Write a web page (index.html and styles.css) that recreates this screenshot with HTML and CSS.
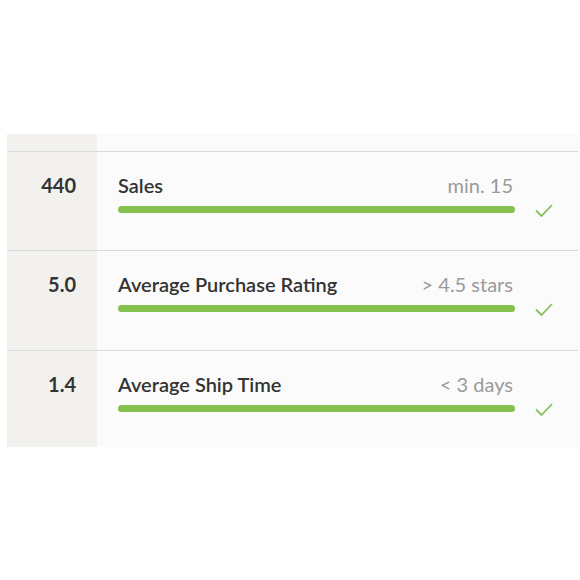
FILE: index.html
```html
<!DOCTYPE html>
<html lang="en">
<head>
    <meta charset="UTF-8">
    <title>Seller Requirements</title>
    <link rel="stylesheet" href="styles.css">
</head>
<body>
    <div class="card">
        <div class="card-top"></div>

        <!-- Sales -->
        <div class="metric">
            <div class="metric-value">440</div>
            <div class="metric-body">
                <div class="metric-head">
                    <span class="metric-label">Sales</span>
                    <span class="metric-target">min. 15</span>
                </div>
                <div class="bar"><div class="bar-fill" style="width: 100%"></div></div>
            </div>
            <div class="metric-check">
                <svg width="18" height="13" viewBox="0 0 18 13"><path d="M1 6.5 L6.5 12 L17 1" fill="none" stroke="#86c05a" stroke-width="1.8"/></svg>
            </div>
        </div>

        <!-- Rating -->
        <div class="metric">
            <div class="metric-value">5.0</div>
            <div class="metric-body">
                <div class="metric-head">
                    <span class="metric-label">Average Purchase Rating</span>
                    <span class="metric-target">&gt; 4.5 stars</span>
                </div>
                <div class="bar"><div class="bar-fill" style="width: 100%"></div></div>
            </div>
            <div class="metric-check">
                <svg width="18" height="13" viewBox="0 0 18 13"><path d="M1 6.5 L6.5 12 L17 1" fill="none" stroke="#86c05a" stroke-width="1.8"/></svg>
            </div>
        </div>

        <!-- Ship time -->
        <div class="metric">
            <div class="metric-value">1.4</div>
            <div class="metric-body">
                <div class="metric-head">
                    <span class="metric-label">Average Ship Time</span>
                    <span class="metric-target">&lt; 3 days</span>
                </div>
                <div class="bar"><div class="bar-fill" style="width: 100%"></div></div>
            </div>
            <div class="metric-check">
                <svg width="18" height="13" viewBox="0 0 18 13"><path d="M1 6.5 L6.5 12 L17 1" fill="none" stroke="#86c05a" stroke-width="1.8"/></svg>
            </div>
        </div>
    </div>
</body>
</html>
```

FILE: styles.css
```css
:root {
    --side-bg: #f2f1ee;
    --main-bg: #fbfbfb;
    --line: #d9d9d9;
    --text: #333333;
    --muted: #9a9a9a;
    --green: #86c14f;
}

* {
    margin: 0;
    padding: 0;
    box-sizing: border-box;
}

body {
    background: #ffffff;
    font-family: "Lato", "Open Sans", sans-serif;
    color: var(--text);
    padding: 134px 2px 0 7px;
}

.card {
    width: 571px;
    background: linear-gradient(to right, var(--side-bg) 90px, var(--main-bg) 90px);
}

.card-top {
    height: 17px;
}

.metric {
    display: grid;
    grid-template-columns: 90px 1fr 63px;
    border-top: 1px solid var(--line);
    height: 99px;
}

.metric:nth-child(3) {
    height: 100px;
}

.metric:last-child {
    height: 97px;
}

.metric-value {
    text-align: right;
    padding: 22px 21px 0 0;
    font-size: 20px;
    font-weight: 700;
    line-height: 22px;
}

.metric-body {
    padding: 22px 0 0 21px;
}

.metric-head {
    display: flex;
    justify-content: space-between;
    align-items: baseline;
    padding-right: 2px;
    line-height: 22px;
}

.metric-label {
    font-size: 20px;
    font-weight: 600;
}

.metric-target {
    font-size: 20px;
    color: var(--muted);
}

.bar {
    margin-top: 10px;
    height: 7px;
    border-radius: 4px;
    background: #e6e6e6;
}

.bar-fill {
    height: 100%;
    border-radius: 4px;
    background: var(--green);
}

.metric-check {
    padding: 52px 0 0 20px;
}

.metric-check svg {
    display: block;
}
```
